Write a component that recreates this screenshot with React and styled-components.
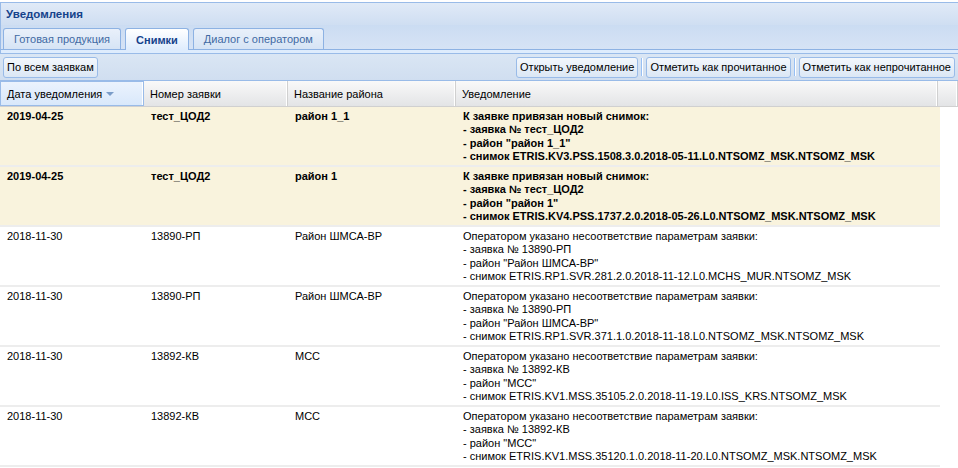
import React from "react";
import styled, { createGlobalStyle } from "styled-components";

const GlobalStyle = createGlobalStyle`
  html, body { margin: 0; padding: 0; background: #fff; }
  body { font-family: "Liberation Sans", Arial, sans-serif; font-size: 11px; color: #000; }
`;

const rows = [
  {
    unread: true,
    date: "2019-04-25",
    num: "тест_ЦОД2",
    area: "район 1_1",
    lines: [
      "К заявке привязан новый снимок:",
      "- заявка № тест_ЦОД2",
      '- район "район 1_1"',
      "- снимок ETRIS.KV3.PSS.1508.3.0.2018-05-11.L0.NTSOMZ_MSK.NTSOMZ_MSK",
    ],
  },
  {
    unread: true,
    date: "2019-04-25",
    num: "тест_ЦОД2",
    area: "район 1",
    lines: [
      "К заявке привязан новый снимок:",
      "- заявка № тест_ЦОД2",
      '- район "район 1"',
      "- снимок ETRIS.KV4.PSS.1737.2.0.2018-05-26.L0.NTSOMZ_MSK.NTSOMZ_MSK",
    ],
  },
  {
    date: "2018-11-30",
    num: "13890-РП",
    area: "Район ШМСА-ВР",
    lines: [
      "Оператором указано несоответствие параметрам заявки:",
      "- заявка № 13890-РП",
      '- район "Район ШМСА-ВР"',
      "- снимок ETRIS.RP1.SVR.281.2.0.2018-11-12.L0.MCHS_MUR.NTSOMZ_MSK",
    ],
  },
  {
    date: "2018-11-30",
    num: "13890-РП",
    area: "Район ШМСА-ВР",
    lines: [
      "Оператором указано несоответствие параметрам заявки:",
      "- заявка № 13890-РП",
      '- район "Район ШМСА-ВР"',
      "- снимок ETRIS.RP1.SVR.371.1.0.2018-11-18.L0.NTSOMZ_MSK.NTSOMZ_MSK",
    ],
  },
  {
    date: "2018-11-30",
    num: "13892-КВ",
    area: "МСС",
    lines: [
      "Оператором указано несоответствие параметрам заявки:",
      "- заявка № 13892-КВ",
      '- район "МСС"',
      "- снимок ETRIS.KV1.MSS.35105.2.0.2018-11-19.L0.ISS_KRS.NTSOMZ_MSK",
    ],
  },
  {
    date: "2018-11-30",
    num: "13892-КВ",
    area: "МСС",
    lines: [
      "Оператором указано несоответствие параметрам заявки:",
      "- заявка № 13892-КВ",
      '- район "МСС"',
      "- снимок ETRIS.KV1.MSS.35120.1.0.2018-11-20.L0.NTSOMZ_MSK.NTSOMZ_MSK",
    ],
  },
];

const cols = "144px 144px 168px 482px";

const App = () => {
  return (
    <>
      <GlobalStyle />
      <Panel>
        <TitleBar>Уведомления</TitleBar>
        <TabStrip>
          <Tab>Готовая продукция</Tab>
          <Tab active>Снимки</Tab>
          <Tab>Диалог с оператором</Tab>
        </TabStrip>
        <TabBody />
        <Toolbar>
          <Button>По всем заявкам</Button>
          <Spacer />
          <Button>Открыть уведомление</Button>
          <Separator />
          <Button>Отметить как прочитанное</Button>
          <Separator />
          <Button>Отметить как непрочитанное</Button>
        </Toolbar>
        <Header>
          <HeadCell sorted>
            Дата уведомления
            <SortArrow />
          </HeadCell>
          <HeadCell>Номер заявки</HeadCell>
          <HeadCell>Название района</HeadCell>
          <HeadCell>Уведомление</HeadCell>
          <HeadCell />
        </Header>
        <Body>
          {rows.map((r, i) => (
            <Row key={i} unread={r.unread}>
              <Cell>{r.date}</Cell>
              <Cell>{r.num}</Cell>
              <Cell>{r.area}</Cell>
              <Cell>
                {r.lines.map((l, j) => (
                  <div key={j}>{l}</div>
                ))}
              </Cell>
            </Row>
          ))}
        </Body>
      </Panel>
    </>
  );
};

const Panel = styled.div`
  width: 958px;
  height: 468px;
  overflow: hidden;
  border-top: 2px solid #fff;
  box-sizing: border-box;
`;

const TitleBar = styled.div`
  height: 22px;
  border-top: 1px solid #99bbe8;
  border-left: 1px solid #99bbe8;
  background: linear-gradient(#e0eaf7, #cfdef2);
  color: #15428b;
  font-weight: bold;
  font-size: 11.5px;
  display: flex;
  align-items: center;
  padding-left: 5px;
`;

const TabStrip = styled.div`
  height: 25px;
  background: linear-gradient(#cbdcf2, #d6e3f5);
  border-left: 1px solid #99bbe8;
  border-bottom: 1px solid #8db2e3;
  display: flex;
  align-items: flex-end;
  gap: 4px;
  padding-left: 2px;
  box-sizing: border-box;
`;

const Tab = styled.div`
  height: ${(p) => (p.active ? "22px" : "21px")};
  margin-bottom: ${(p) => (p.active ? "-1px" : "0")};
  padding: 0 10px;
  border: 1px solid #8db2e3;
  border-bottom: none;
  border-radius: 3px 3px 0 0;
  background: ${(p) =>
    p.active ? "linear-gradient(#ffffff, #deecfd)" : "linear-gradient(#e9f0fa, #d6e4f5)"};
  color: ${(p) => (p.active ? "#15428b" : "#416aa3")};
  font-weight: ${(p) => (p.active ? "bold" : "normal")};
  font-size: 11px;
  display: flex;
  align-items: center;
  box-sizing: border-box;
`;

const TabBody = styled.div`
  height: 3px;
  background: #deecfd;
  border-left: 1px solid #99bbe8;
  border-bottom: 1px solid #99bbe8;
`;

const Toolbar = styled.div`
  height: 27px;
  box-sizing: border-box;
  background: linear-gradient(#dae6f4, #d0def0);
  border-bottom: 1px solid #99bbe8;
  display: flex;
  align-items: center;
  padding: 0 3px;
`;

const Spacer = styled.div`
  flex: 1;
`;

const Button = styled.div`
  height: 21px;
  box-sizing: border-box;
  padding: 0 3px;
  border: 1px solid #99bbe8;
  border-radius: 3px;
  background: linear-gradient(#f3f7fc, #dbe7f5);
  font-size: 11px;
  color: #000;
  display: flex;
  align-items: center;
  white-space: nowrap;
`;

const Separator = styled.div`
  width: 1px;
  height: 18px;
  margin: 0 3px;
  background: #98c0f4;
  border-right: 1px solid #fff;
`;

const Header = styled.div`
  display: grid;
  grid-template-columns: ${cols} 1fr;
  height: 25px;
  border-bottom: 1px solid #d0d0d0;
  background: linear-gradient(#f9f9f9, #e3e4e6);
`;

const HeadCell = styled.div`
  display: flex;
  align-items: center;
  padding-left: 6px;
  font-size: 11px;
  color: #000;
  border-right: 1px solid #d0d0d0;
  box-shadow: inset -1px 0 0 #fff;
  background: ${(p) => (p.sorted ? "linear-gradient(#ebf3fd, #d9e8fb)" : "transparent")};
  ${(p) => p.sorted && "border: 1px solid #99bbe8;"}
`;

const SortArrow = styled.span`
  margin-left: 4px;
  margin-top: 1px;
  width: 0;
  height: 0;
  border-left: 4px solid transparent;
  border-right: 4px solid transparent;
  border-top: 4px solid #7a9cc8;
`;

const Body = styled.div`
  width: 940px;
`;

const Row = styled.div`
  display: grid;
  grid-template-columns: ${cols};
  height: 60px;
  box-sizing: border-box;
  border-bottom: 2px solid #ededed;
  background: ${(p) => (p.unread ? "#f9f3dd" : "#fff")};
  font-weight: ${(p) => (p.unread ? "bold" : "normal")};
`;

const Cell = styled.div`
  padding: 3px 6px 0 7px;
  font-size: 11px;
  line-height: 13.4px;
  white-space: nowrap;
  overflow: hidden;
`;

export default App;
